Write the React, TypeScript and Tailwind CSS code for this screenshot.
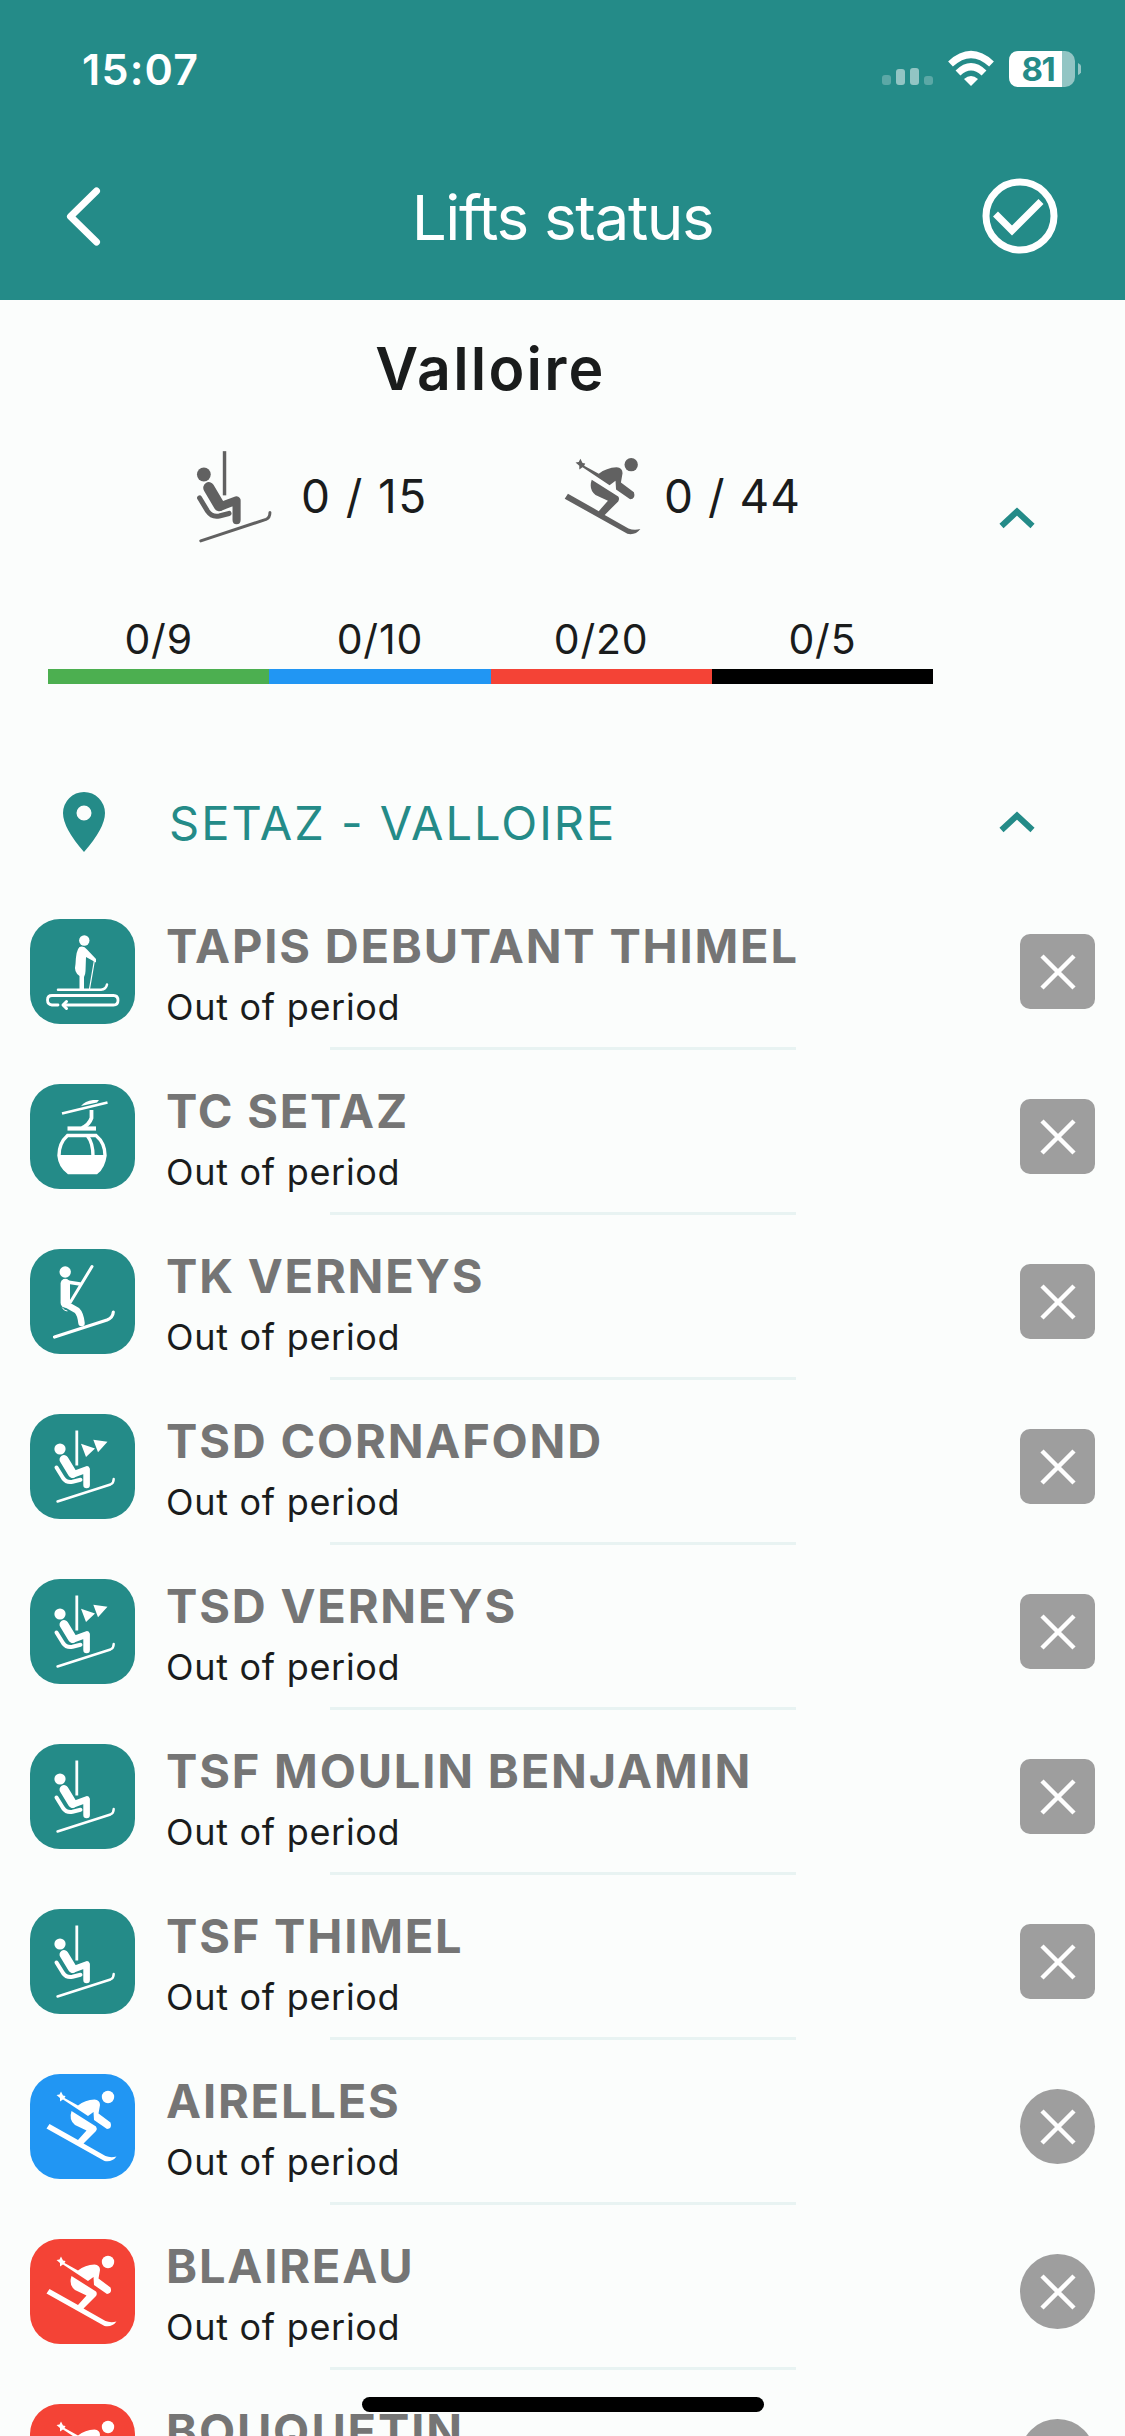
import type { ReactNode } from "react";

type Kind = "carpet" | "gondola" | "drag" | "chairExpress" | "chair" | "blue" | "red";

const LIFTS: { name: string; kind: Kind }[] = [
  { name: "TAPIS DEBUTANT THIMEL", kind: "carpet" },
  { name: "TC SETAZ", kind: "gondola" },
  { name: "TK VERNEYS", kind: "drag" },
  { name: "TSD CORNAFOND", kind: "chairExpress" },
  { name: "TSD VERNEYS", kind: "chairExpress" },
  { name: "TSF MOULIN BENJAMIN", kind: "chair" },
  { name: "TSF THIMEL", kind: "chair" },
  { name: "AIRELLES", kind: "blue" },
  { name: "BLAIREAU", kind: "red" },
  { name: "BOUQUETIN", kind: "red" },
];

const SLOPES = [
  { label: "0/9", color: "bg-[#4caf50]" },
  { label: "0/10", color: "bg-[#2196f3]" },
  { label: "0/20", color: "bg-[#f44336]" },
  { label: "0/5", color: "bg-black" },
];

// All glyphs share the 105x105 tile grid.
const ChairGlyph = () => (
  <g fill="none" stroke="currentColor" strokeLinecap="round" strokeLinejoin="round">
    <circle cx="30" cy="35" r="5.6" fill="currentColor" stroke="none" />
    <path d="M46.8 16.5V51.5" strokeWidth="2.8" strokeLinecap="butt" />
    <path d="M34 45.500L42.500 59.500" strokeWidth="9" />
    <path d="M43 60.500L56.600 55.500V71" strokeWidth="6.600" />
    <path d="M26.5 53.5L33 64Q36.500 69 42.500 67.800L50.5 65.8" strokeWidth="4" />
    <path d="M27.5 87.5L80.5 70.5Q83.7 69.2 83.7 65" strokeWidth="2.4" />
  </g>
);

const SkierGlyph = () => (
  <g fill="currentColor">
    <circle cx="78" cy="23" r="6.2" />
    <path d="M26.5 21L29.5 20.5L31 17.5L33 21.5L35.5 22L34.500 24L48 31.5Q55 26 64.5 25.5Q70 26 70 31L68.5 39.5L80.500 48.500Q82.500 54.5 77 55L64 46L63.5 38L58 42L33 25.5L30 27.5L30 24Z" />
    <path d="M41.5 37L66 52.5Q67.5 54.5 66 57L53.5 69.5L75.500 82Q80.500 84 86.5 82.5Q82 88.500 74.5 87L16.5 54.5L19.5 50L48 66L56.500 56.5L45 51Q38.500 46 41.5 37Z" />
  </g>
);

const CarpetGlyph = () => (
  <g fill="none" stroke="currentColor" strokeLinecap="round" strokeLinejoin="round">
    <circle cx="54.3" cy="21.5" r="5.2" fill="currentColor" stroke="none" />
    <path d="M49.5 28Q54 26.5 57 30.5L66 40V43.500L56 38L55.500 52Q55.5 55 54 58V71H49.5V57Q43.500 53 45.500 45Q46 31 49.5 28Z" fill="currentColor" stroke="none" />
    <path d="M64.5 41L59.5 70" strokeWidth="1.2" />
    <path d="M28 70.7H71Q76 70.5 77 65.5" strokeWidth="2.5" />
    <path d="M28 86H22Q17.5 85.5 17.5 81Q17.5 76.5 22 76.5H83.5Q88 76.5 88 81.5Q88 86 83.5 86H34" strokeWidth="2.8" />
    <path d="M36.5 82.5L33 86L36.5 89.5" strokeWidth="3" />
  </g>
);

const GondolaGlyph = () => (
  <g fill="none" stroke="currentColor">
    <path d="M32 29.5L77.5 18.5" strokeWidth="2.8" />
    <path d="M51 22Q55 17 63 16L69 16L67 18.5Z" fill="currentColor" stroke="none" />
    <path d="M61.5 26V34Q59 41 52 44" strokeWidth="3.8" />
    <path d="M37.5 44.5H66" strokeWidth="4.2" />
    <path d="M37.5 51.5H66Q75 59 75 71.5Q73.5 83 66.5 88.5H38.5Q30 82 29 71.5Q29 59 37.5 51.5Z" strokeWidth="3.4" />
    <path d="M28.5 71H75.5Q75 81 67 89.5H38Q29 82 28.5 71Z" fill="currentColor" stroke="none" />
    <path d="M57.5 52Q63 59 63 72" strokeWidth="3.4" />
  </g>
);

const DragGlyph = () => (
  <g fill="none" stroke="currentColor" strokeLinecap="round" strokeLinejoin="round">
    <circle cx="35.2" cy="23" r="5.7" fill="currentColor" stroke="none" />
    <path d="M62 17.5L40.5 53" strokeWidth="3" />
    <path d="M35.3 34.500V54" strokeWidth="9.4" />
    <path d="M34 32.5L50 35" strokeWidth="3.5" />
    <path d="M36.500 55.500L47 61.500Q50.500 65 51.5 74" strokeWidth="6.5" />
    <path d="M32.5 59Q34 62 37 62" strokeWidth="1" />
    <path d="M24.5 88L77 71Q83 68.5 83.3 63" strokeWidth="3.2" />
  </g>
);

const ExpressGlyph = () => (
  <>
    <ChairGlyph />
    <path d="M51 29.7L65 34.5L56 43ZM63.3 25.7L77.5 27.7L68 38.3Z" fill="currentColor" />
  </>
);

const GLYPHS: Record<Kind, { glyph: ReactNode; color: string; slope?: boolean }> = {
  carpet: { glyph: <CarpetGlyph />, color: "bg-[#248b88]" },
  gondola: { glyph: <GondolaGlyph />, color: "bg-[#248b88]" },
  drag: { glyph: <DragGlyph />, color: "bg-[#248b88]" },
  chairExpress: { glyph: <ExpressGlyph />, color: "bg-[#248b88]" },
  chair: { glyph: <ChairGlyph />, color: "bg-[#248b88]" },
  blue: { glyph: <SkierGlyph />, color: "bg-[#2196f3]", slope: true },
  red: { glyph: <SkierGlyph />, color: "bg-[#f44336]", slope: true },
};

const StatusBar = () => (
  <div className="flex h-[138px] items-center justify-between pl-[82px] pr-[44px] text-white">
    <span className="text-[43px] font-semibold leading-none tracking-[1.2px]">15:07</span>
    <svg className="mb-[2px]" width="202" height="40" viewBox="0 0 202 40">
      <g fill="white">
        <rect x="3" y="27" width="9" height="10" rx="3" opacity="0.25" />
        <rect x="17" y="21" width="9" height="16" rx="3" opacity="0.5" />
        <rect x="31" y="20" width="9" height="17" rx="3" opacity="0.5" />
        <rect x="45" y="28" width="9" height="9" rx="3" opacity="0.25" />
      </g>
      <g fill="none" stroke="white" strokeWidth="7">
        <path d="M71.5 16Q92 -3 112.5 16" />
        <path d="M79 25Q92 12.500 105 25" />
      </g>
      <path d="M85 31Q92 25 99 31L92 38Z" fill="white" />
      <rect x="130" y="3" width="66" height="36" rx="10" fill="white" opacity="0.5" />
      <path d="M140 3H183V39H140Q130 39 130 29V13Q130 3 140 3Z" fill="white" />
      <path d="M199 15Q203 17 203 21Q203 25 199 27Z" fill="white" opacity="0.5" />
      <text x="142.500" y="33" fill="#248b88" fontSize="33" fontWeight="700" letterSpacing="-1.5">81</text>
    </svg>
  </div>
);

const Header = () => (
  <header className="h-[300px] bg-[#248b88] text-white">
    <StatusBar />
    <div className="grid h-[158px] grid-cols-[250px_1fr_250px] items-center">
      <svg className="ml-[64px]" width="40" height="62" viewBox="0 0 40 62" fill="none" stroke="white" strokeWidth="7" strokeLinecap="round" strokeLinejoin="round">
        <path d="M32.5 5L6.5 30.500L32.5 56" />
      </svg>
      <h1 className="pt-[2px] text-center text-[62px] font-normal leading-none tracking-[-1.4px]">Lifts status</h1>
      <svg className="mb-[2px] ml-auto mr-[66px]" width="78" height="78" viewBox="0 0 78 78" fill="none" stroke="white">
        <circle cx="39" cy="39" r="34" strokeWidth="7" />
        <path d="M14.5 37L31 53.5L60 24.5" strokeWidth="7" />
      </svg>
    </div>
  </header>
);

const ChevronUp = () => (
  <svg width="36" height="22" viewBox="0 0 36 22" fill="none" stroke="#248b88" strokeWidth="6">
    <path d="M2.5 19L18 4.500L33.5 19" />
  </svg>
);

const Summary = () => (
  <section className="flex h-[448px] items-start text-[#1a1c1c]">
    <div className="ml-[48px] w-[885px]">
      <h2 className="mt-[36px] text-center text-[59px] font-[560] leading-[66px] tracking-[2.2px]">Valloire</h2>
      <div className="mt-[40px] flex h-[108px] items-center">
        <svg className="ml-[146px] text-[#616161]" width="80" height="96" viewBox="22 14 65 76" preserveAspectRatio="none">
          <ChairGlyph />
        </svg>
        <span className="ml-[27px] w-[261px] text-[46px] leading-none tracking-[1.4px]">0 / 15</span>
        <svg className="text-[#616161]" width="80" height="80" viewBox="14 15 74 74">
          <SkierGlyph />
        </svg>
        <span className="ml-[22px] text-[46px] leading-none tracking-[1px]">0 / 44</span>
      </div>
      <div className="mt-[66px] grid grid-cols-4">
        {SLOPES.map((slope) => (
          <div key={slope.label} className="text-center text-[41px] leading-[46px] tracking-[0.8px]">
            {slope.label}
            <div className={`mt-[7px] h-[15px] ${slope.color}`} />
          </div>
        ))}
      </div>
    </div>
    <div className="ml-[66px] mt-[207px]">
      <ChevronUp />
    </div>
  </section>
);

const SectorTitle = () => (
  <div className="flex h-[141px] items-center pl-[63px] pr-[90px] pt-[7px]">
    <svg width="42" height="60" viewBox="0 0 42 60" fill="#248b88" fillRule="evenodd">
      <path d="M21 0A21 21 0 0 1 42 21Q42 36 21 60Q0 36 0 21A21 21 0 0 1 21 0ZM21 13.5A7.5 7.5 0 1 0 21 28.5A7.5 7.5 0 1 0 21 13.5Z" />
    </svg>
    <h3 className="ml-[64px] flex-1 text-[47px] leading-none tracking-[2px] text-[#248b88]">SETAZ - VALLOIRE</h3>
    <ChevronUp />
  </div>
);

const LiftRow = ({ name, kind }: { name: string; kind: Kind }) => {
  const { glyph, color, slope } = GLYPHS[kind];
  return (
    <li className="h-[165px]">
      <div className="flex h-[158px] items-center px-[30px]">
        <div className={`mt-[7px] size-[105px] rounded-[30px] text-white ${color}`}>
          <svg width="105" height="105" viewBox="0 0 105 105">
            {glyph}
          </svg>
        </div>
        <div className="ml-[31px] mt-[17px] flex-1">
          <p className="text-[47px] font-[650] leading-[60px] tracking-[1.8px] text-[#757575]">{name}</p>
          <p className="text-[36px] leading-[62px] tracking-[0.7px] text-[#1a1c1c]">Out of period</p>
        </div>
        <div className={`mt-[7px] flex size-[75px] items-center justify-center bg-[#9e9e9e] ${slope ? "rounded-full" : "rounded-[10px]"}`}>
          <svg width="36" height="36" viewBox="0 0 36 36" stroke="white" strokeWidth="4.5">
            <path d="M2 2L34 34M34 2L2 34" />
          </svg>
        </div>
      </div>
      <div className="mx-auto h-[3px] w-[466px] bg-[#e8f3f2]" />
    </li>
  );
};

const App = () => (
  <main className="relative h-[2436px] w-[1125px] overflow-hidden bg-[#fbfdfc] font-['Inter','Liberation_Sans',sans-serif]">
    <Header />
    <Summary />
    <SectorTitle />
    <ul>
      {LIFTS.map((lift) => (
        <LiftRow key={lift.name} {...lift} />
      ))}
    </ul>
    <div className="absolute bottom-[24px] left-[362px] h-[15px] w-[402px] rounded-full bg-black" />
  </main>
);

export default App;
